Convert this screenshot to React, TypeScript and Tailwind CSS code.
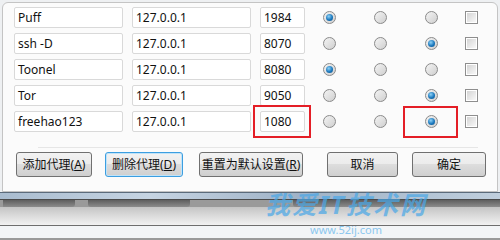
import React from "react";

type Row = { name: string; ip: string; port: string; pick: number };

const rows: Row[] = [
  { name: "Puff", ip: "127.0.0.1", port: "1984", pick: 0 },
  { name: "ssh -D", ip: "127.0.0.1", port: "8070", pick: 2 },
  { name: "Toonel", ip: "127.0.0.1", port: "8080", pick: 0 },
  { name: "Tor", ip: "127.0.0.1", port: "9050", pick: 2 },
  { name: "freehao123", ip: "127.0.0.1", port: "1080", pick: 2 },
];

function Radio({ on }: { on: boolean }) {
  return (
    <span className="flex h-[13px] w-[13px] shrink-0 items-center justify-center rounded-full border border-[#8a8a8a] bg-[linear-gradient(135deg,#f4f4f4,#cfcfcf)]">
      {on && (
        <span className="h-[7px] w-[7px] rounded-full bg-[radial-gradient(circle_at_40%_35%,#8fd2f7,#1b78bd_55%,#0b4f86)]" />
      )}
    </span>
  );
}

function Check() {
  return (
    <span className="flex h-[13px] w-[13px] shrink-0 items-center justify-center border border-[#8e8e8e] bg-white">
      <span className="h-[9px] w-[9px] bg-[linear-gradient(135deg,#d4d4d4,#f8f8f8)]" />
    </span>
  );
}

function Field({ w, children }: { w: string; children: React.ReactNode }) {
  return (
    <div className={`flex h-[21px] items-center rounded-[2px] border border-[#d9d9d9] bg-white pl-[3px] text-[12px] text-[#111] ${w}`}>
      {children}
    </div>
  );
}

function Btn({ w, focus, children }: { w: string; focus?: boolean; children: React.ReactNode }) {
  return (
    <div
      className={`flex h-[25px] items-center justify-center whitespace-nowrap rounded-[3px] border text-[12px] text-[#111] ${w} ${
        focus
          ? "border-[#3c9ee0] bg-[linear-gradient(#f2f2f2,#ebebeb_50%,#dcdcdc_50%,#cfcfcf)] shadow-[inset_0_0_0_1px_#bfe3f9]"
          : "border-[#707070] bg-[linear-gradient(#f2f2f2,#ebebeb_50%,#dddddd_50%,#cfcfcf)]"
      }`}
    >
      {children}
    </div>
  );
}

export default function App() {
  return (
    <div
      className="relative h-[240px] w-[500px] overflow-hidden bg-[#eef0f2]"
      style={{ fontFamily: '"Noto Sans", "Noto Sans CJK SC", sans-serif' }}
    >
      <div className="ml-[2px] mt-[2px] h-[190px] w-[496px] rounded-t-[6px] border border-[#c4c4c4] bg-[#fbfbfb]">
        <div className="flex flex-col gap-[5px] pl-[11px] pt-[4px]">
          {rows.map((r) => (
            <div key={r.name} className="flex items-center">
              <Field w="w-[109px]">{r.name}</Field>
              <div className="w-[9px]" />
              <Field w="w-[119px]">{r.ip}</Field>
              <div className="w-[9px]" />
              <Field w="w-[45px]">{r.port}</Field>
              <div className="ml-[18px] flex items-center gap-[38px]">
                {[0, 1, 2].map((i) => (
                  <Radio key={i} on={r.pick === i} />
                ))}
              </div>
              <div className="ml-[27px]">
                <Check />
              </div>
            </div>
          ))}
        </div>
        <div className="ml-[35px] mt-[15px] h-px w-[440px] bg-[#e6e6e6]" />
        <div className="ml-[13px] mt-[4px] flex items-center">
          <Btn w="w-[76px]">
            添加代理(<span className="underline">A</span>)
          </Btn>
          <div className="w-[13px]" />
          <Btn w="w-[78px]" focus>
            删除代理(<span className="underline">D</span>)
          </Btn>
          <div className="w-[16px]" />
          <Btn w="w-[104px]">
            重置为默认设置(<span className="underline">R</span>)
          </Btn>
          <div className="w-[24px]" />
          <Btn w="w-[71px]">取消</Btn>
          <div className="w-[14px]" />
          <Btn w="w-[74px]">确定</Btn>
        </div>
      </div>

      <div className="h-px bg-[#5b6b7b]" />
      <div className="h-[6px] bg-[linear-gradient(90deg,#a9bccf,#c6d4e2_30%,#9fb2c6_60%,#c0cfdd)]" />
      <div className="h-px bg-[#4a4a4a]" />
      <div className="flex h-[7px] bg-[#9a9a9a]">
        <div className="ml-[3px] w-[72px] rounded-br-[3px] bg-[linear-gradient(#5e5e5e,#8c8c8c)]" />
        <div className="ml-[13px] w-[102px] rounded-bl-[3px] rounded-br-[3px] bg-[linear-gradient(#5e5e5e,#8c8c8c)]" />
        <div className="ml-[103px] flex-1 rounded-bl-[3px] bg-[linear-gradient(#5e5e5e,#8c8c8c)]" />
      </div>
      <div className="h-[18px] bg-[linear-gradient(#c4c4c4,#f2f2f2)]" />
      <div className="h-px bg-[#6e6e6e]" />
      <div className="h-[12px] bg-[#f3f5f7]" />
      <div className="h-[3px] bg-[#9a9a9a]" />

      <div className="pointer-events-none absolute left-[254px] top-[188px] flex w-[184px] flex-col items-center gap-[3px] opacity-70">
        <div className="text-[25px] font-bold italic leading-[32px] tracking-[2px] text-[#4aa8e8]">我爱IT技术网</div>
        <div className="text-[11px] leading-[14px] text-[#5fb4ec]">www.52ij.com</div>
      </div>

      <div className="pointer-events-none absolute left-[253px] top-[105px] h-[33px] w-[58px] border-2 border-[#e41e26]" />
      <div className="pointer-events-none absolute left-[403px] top-[106px] h-[32px] w-[55px] border-2 border-[#e41e26]" />
    </div>
  );
}
